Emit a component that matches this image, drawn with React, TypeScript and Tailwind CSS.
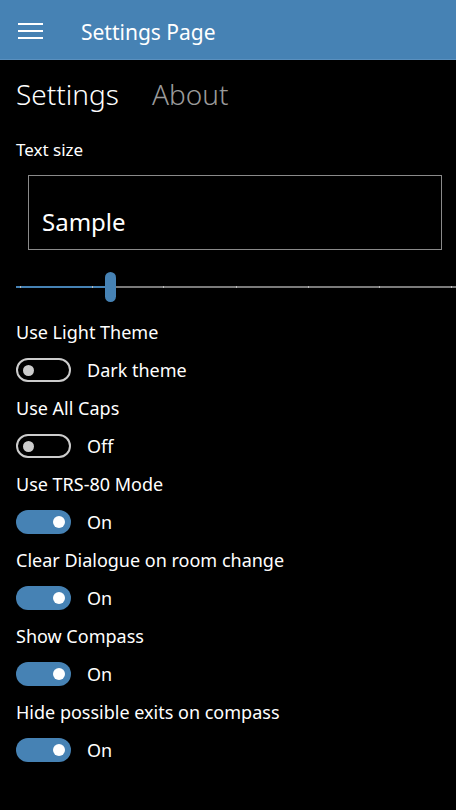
const font = { fontFamily: '"Noto Sans", "Open Sans", sans-serif' };

const Toggle = ({ on }: { on: boolean }) =>
  on ? (
    <div className="w-[55px] h-[24px] rounded-full bg-[#4682b4] flex items-center justify-end pr-[6px]">
      <div className="w-[12px] h-[12px] rounded-full bg-white" />
    </div>
  ) : (
    <div className="w-[55px] h-[24px] rounded-full border-2 border-[#cccccc] flex items-center pl-[5px]">
      <div className="w-[11px] h-[11px] rounded-full bg-[#cccccc]" />
    </div>
  );

const settings = [
  { label: "Use Light Theme", on: false, text: "Dark theme" },
  { label: "Use All Caps", on: false, text: "Off" },
  { label: "Use TRS-80 Mode", on: true, text: "On" },
  { label: "Clear Dialogue on room change", on: true, text: "On" },
  { label: "Show Compass", on: true, text: "On" },
  { label: "Hide possible exits on compass", on: true, text: "On" },
];

const ticks = [20, 92, 163, 236, 308, 379, 451];

export default function App() {
  return (
    <div className="w-[456px] h-[810px] bg-black text-white overflow-hidden" style={font}>
      {/* header */}
      <div className="h-[60px] bg-[#4682b4] border-b border-[#5a90bf] flex items-center">
        <div className="ml-[18px] mt-[3px] w-[25px] flex flex-col gap-[5px]">
          <div className="h-[2px] bg-white" />
          <div className="h-[2px] bg-white" />
          <div className="h-[2px] bg-white" />
        </div>
        <div className="ml-[38px] mt-[6px] text-[21px] leading-none">Settings Page</div>
      </div>

      {/* pivot tabs */}
      <div className="flex items-center gap-[33px] px-[16px] h-[68px] text-[28px] font-light">
        <span>Settings</span>
        <span className="text-[#9a9a9a]">About</span>
      </div>

      <div className="px-[16px] text-[17px] leading-[24px] mt-[10px]">Text size</div>

      <div className="ml-[28px] mr-[14px] mt-[13px] h-[75px] border border-[#8a8a8a] flex items-center pl-[13px] pt-[18px]">
        <span className="text-[24px]">Sample</span>
      </div>

      {/* slider */}
      <div className="relative h-[52px] ml-[16px]">
        <div className="absolute left-0 right-0 top-[36px] h-[2px] bg-[#7a7a7a]" />
        <div className="absolute left-0 w-[94px] top-[36px] h-[2px] bg-[#4682b4]" />
        {ticks.map((x) => (
          <div key={x} className="absolute top-[36px] w-px h-[2px] bg-[#bbbbbb]" style={{ left: x - 16 }} />
        ))}
        <div className="absolute left-[89px] top-[22px] w-[11px] h-[30px] rounded-full bg-[#4682b4]" />
      </div>

      <div className="flex flex-col px-[16px] mt-[18px]">
        {settings.map((s) => (
          <div key={s.label} className="h-[76px] flex flex-col">
            <div className="text-[18px] leading-[24px] h-[38px]">{s.label}</div>
            <div className="flex items-center gap-[16px] h-[24px]">
              <Toggle on={s.on} />
              <span className="text-[18px] leading-[24px]">{s.text}</span>
            </div>
          </div>
        ))}
      </div>
    </div>
  );
}
